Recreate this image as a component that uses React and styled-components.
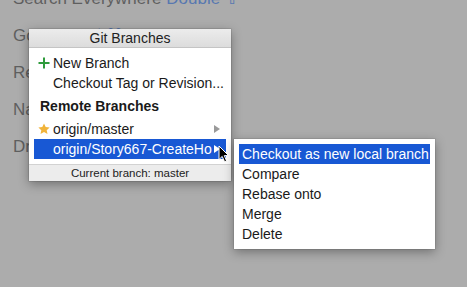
import React from 'react';
import styled, { createGlobalStyle } from 'styled-components';

const GlobalStyle = createGlobalStyle`
  html, body {
    margin: 0;
    padding: 0;
    background: #acacac;
  }
  body {
    font-family: "Liberation Sans", Arial, sans-serif;
  }
`;

const Page = styled.div`
  position: relative;
  width: 467px;
  height: 287px;
  overflow: hidden;
  background: #acacac;
`;

/* empty editor hints behind the popup */
const Hints = styled.div`
  display: flex;
  flex-direction: column;
  gap: 17px;
  padding: 0 0 0 13px;
  margin-top: -11px;
`;

const Hint = styled.div`
  font-size: 17px;
  line-height: 20px;
  color: #5f5f5f;
  white-space: nowrap;
`;

const Key = styled.span`
  color: #5878b0;
  margin-left: 5px;
`;

const Popup = styled.div`
  position: absolute;
  left: 29px;
  top: 29px;
  width: 202px;
  background: #ffffff;
  box-shadow: 0 3px 10px rgba(0, 0, 0, 0.35), 0 0 0 0.5px rgba(0, 0, 0, 0.2);
  display: flex;
  flex-direction: column;
`;

const Title = styled.div`
  height: 18px;
  line-height: 18px;
  text-align: center;
  font-size: 14px;
  color: #222;
  background: linear-gradient(#ececec, #dcdcdc);
  border-bottom: 1px solid #c4c4c4;
`;

const List = styled.div`
  display: flex;
  flex-direction: column;
  padding: 5px 5px 5px;
`;

const Row = styled.div`
  position: relative;
  display: flex;
  align-items: center;
  height: ${p => p.$h || 20}px;
  padding-left: ${p => p.$indent ?? 19}px;
  font-size: 14px;
  color: ${p => (p.$active ? '#fff' : '#1a1a1a')};
  background: ${p => (p.$active ? '#1858d4' : 'transparent')};
  font-weight: ${p => (p.$bold ? 'bold' : 'normal')};
  white-space: nowrap;
  overflow: hidden;
`;

const Header = styled(Row)`
  margin: 3px 0;
`;

const Lead = styled.span`
  position: absolute;
  left: 4px;
  top: 50%;
  transform: translateY(-50%);
  display: flex;
`;

const Arrow = styled.span`
  position: absolute;
  right: 6px;
  top: 50%;
  margin-top: -4px;
  width: 0;
  height: 0;
  border-top: 4px solid transparent;
  border-bottom: 4px solid transparent;
  border-left: 6px solid ${p => (p.$light ? '#ffffff' : '#9a9a9a')};
`;

const Footer = styled.div`
  height: 16px;
  line-height: 16px;
  text-align: center;
  font-size: 11.5px;
  color: #222;
  background: #ececec;
  border-top: 1px solid #d2d2d2;
`;

const Submenu = styled.div`
  position: absolute;
  left: 234px;
  top: 139px;
  width: 201px;
  padding: 5px;
  box-sizing: border-box;
  background: #ffffff;
  box-shadow: 0 3px 10px rgba(0, 0, 0, 0.35), 0 0 0 0.5px rgba(0, 0, 0, 0.15);
  display: flex;
  flex-direction: column;
`;

const Cursor = styled.svg`
  position: absolute;
  left: 218px;
  top: 145px;
`;

const Plus = () => (
  <svg width="12" height="12" viewBox="0 0 12 12">
    <path d="M6 0.5V11.5M0.5 6H11.5" stroke="#2f9b3c" strokeWidth="2" />
  </svg>
);

const Star = () => (
  <svg width="12" height="12" viewBox="0 0 24 24">
    <path
      d="M12 1l3.4 7.1 7.8.9-5.8 5.3 1.6 7.7L12 18.1l-7 3.9 1.6-7.7L.8 9l7.8-.9z"
      fill="#f1b43a"
    />
  </svg>
);

const actions = ['Checkout as new local branch', 'Compare', 'Rebase onto', 'Merge', 'Delete'];

export default function App() {
  return (
    <Page>
      <GlobalStyle />
      <Hints>
        <Hint>Search Everywhere<Key>Double ⇧</Key></Hint>
        <Hint>Go to File<Key>⇧⌘O</Key></Hint>
        <Hint>Recent Files<Key>⌘E</Key></Hint>
        <Hint>Navigation Bar<Key>⌥Home</Key></Hint>
        <Hint>Drop files here to open</Hint>
      </Hints>

      <Popup>
        <Title>Git Branches</Title>
        <List>
          <Row>
            <Lead><Plus /></Lead>
            New Branch
          </Row>
          <Row>Checkout Tag or Revision...</Row>
          <Header $bold $indent={6}>Remote Branches</Header>
          <Row>
            <Lead><Star /></Lead>
            origin/master
            <Arrow />
          </Row>
          <Row $active>
            origin/Story667-CreateHo
            <Arrow $light />
          </Row>
        </List>
        <Footer>Current branch: master</Footer>
      </Popup>

      <Submenu>
        {actions.map((a, i) => (
          <Row key={a} $indent={3} $active={i === 0}>{a}</Row>
        ))}
      </Submenu>

      <Cursor width="12" height="18" viewBox="0 0 12 18">
        <path d="M1 1V14.5L4.2 11.4L6.6 16.8L8.6 15.9L6.3 10.6H10.6Z" fill="#000" stroke="#fff" strokeWidth="1" />
      </Cursor>
    </Page>
  );
}
